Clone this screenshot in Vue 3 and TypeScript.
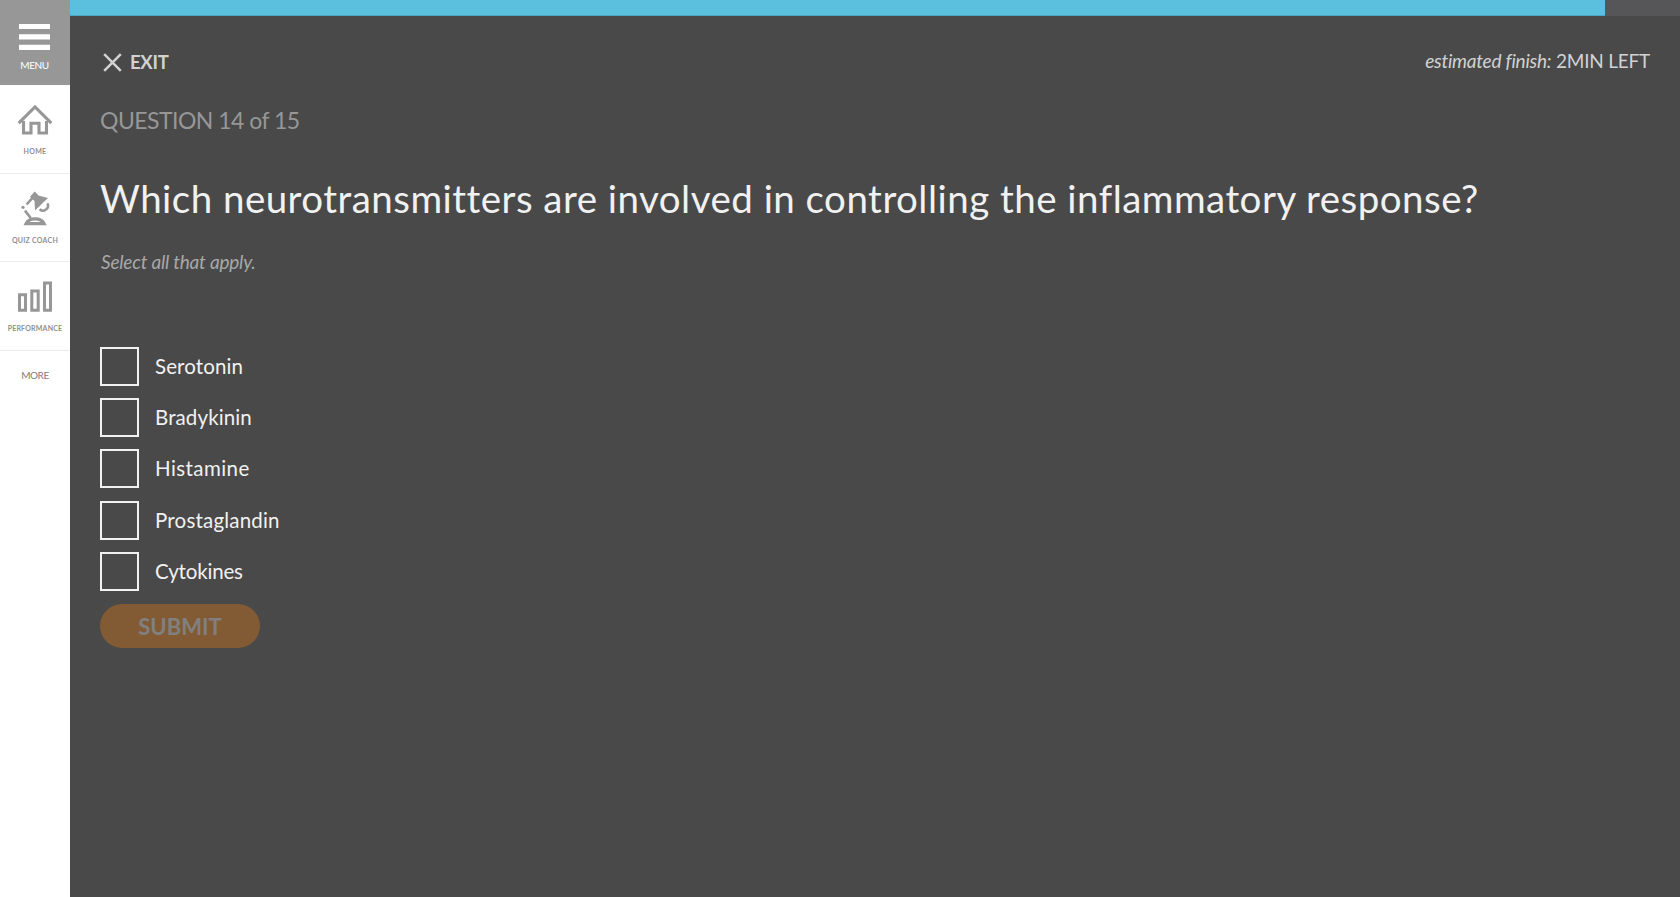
<script setup lang="ts">
interface Option {
  id: string
  label: string
  tracking: number
}

const progress = 95.34
const options: Option[] = [
  { id: 'serotonin', label: 'Serotonin', tracking: 0.1 },
  { id: 'bradykinin', label: 'Bradykinin', tracking: 0.12 },
  { id: 'histamine', label: 'Histamine', tracking: 0.42 },
  { id: 'prostaglandin', label: 'Prostaglandin', tracking: 0.2 },
  { id: 'cytokines', label: 'Cytokines', tracking: -0.17 },
]
</script>

<template>
  <div class="app">
    <nav class="sidebar">
      <button class="menu" type="button">
        <svg width="31" height="27" viewBox="0 0 31 27"><path d="M0 0h31v5H0zM0 10.300h31v5.200H0zM0 20.800h31v5.200H0z" fill="#fff" /></svg>
        <span>MENU</span>
      </button>
      <a class="item home">
        <svg width="36" height="36" viewBox="0 0 36 36" fill="none" stroke="#979797" stroke-width="3.100">
          <path d="M1.700 22.200 18 6l16.300 16.200" />
          <path d="M6.500 20V32H14v-9.800h8V32h7.500V20" />
        </svg>
        <span>HOME</span>
      </a>
      <a class="item coach">
        <svg width="36" height="36" viewBox="0 0 36 36" fill="none" stroke="#979797">
          <path d="M17.700 1.400 21.500 5.500 31 8 18 20.500 17.500 11 13 6.800z" fill="#979797" stroke="none" />
          <path d="M15.500 7.800 9.600 14.500M8 20.600l5.700 7.400" stroke-width="2.600" />
          <circle cx="6" cy="17.300" r="1.600" fill="#979797" stroke="none" />
          <path d="M30.400 13.200a5 5 0 0 1-7.800 6" stroke-width="2.500" />
          <path d="M9.100 33.600h18c-1.500-3.300-4.800-4.700-9-4.700s-7.500 1.400-9 4.700z" stroke-width="3.300" />
        </svg>
        <span>QUIZ COACH</span>
      </a>
      <a class="item performance">
        <svg width="36" height="36" viewBox="0 0 36 36" fill="none" stroke="#979797" stroke-width="3">
          <path d="M2.500 16.700h6v15.500h-6zM14.800 13h6.400v19.200h-6.400zM27.500 5h6v27.200h-6z" />
        </svg>
        <span>PERFORMANCE</span>
      </a>
      <a class="more">MORE</a>
    </nav>

    <main class="main">
      <div class="track"><div class="fill" :style="{ width: progress + '%' }"></div></div>
      <div class="content">
        <header class="top">
          <button class="exit" type="button">
            <svg width="19" height="19" viewBox="0 0 19 19"><path d="M1.200 1.200l16.600 16.600M17.800 1.200L1.200 17.800" stroke="#d2d2d2" stroke-width="2.500" /></svg>
            <span>EXIT</span>
          </button>
          <p class="finish"><em>estimated finish:</em> 2MIN LEFT</p>
        </header>
        <p class="count">QUESTION 14 of 15</p>
        <h1 class="question">Which neurotransmitters are involved in controlling the inflammatory response?</h1>
        <p class="hint">Select all that apply.</p>
        <ul class="options">
          <li v-for="option in options" :key="option.id" class="option">
            <span class="box" role="checkbox" aria-checked="false"></span>
            <span class="label" :style="{ letterSpacing: option.tracking + 'px' }">{{ option.label }}</span>
          </li>
        </ul>
        <button class="submit" type="button" disabled>SUBMIT</button>
      </div>
    </main>
  </div>
</template>

<style>
body { margin: 0; background: #494949; }
</style>

<style scoped>
.app {
  display: flex;
  height: 100vh;
  overflow: hidden;
  font-family: Lato, "Open Sans", sans-serif;
  color: #f1f1f1;
  background: #494949;
}
button { border: 0; background: none; font: inherit; padding: 0; color: inherit; }
p, h1, ul { margin: 0; padding: 0; }
svg { display: block; flex: none; }

.sidebar {
  width: 70px;
  flex: none;
  background: #fff;
  display: flex;
  flex-direction: column;
}
.menu {
  height: 85px;
  box-sizing: border-box;
  padding: 24px 1px 0 0;
  display: flex;
  flex-direction: column;
  align-items: center;
  gap: 8px;
  background: #979797;
  color: #fff;
  font-size: 10px;
  line-height: 12px;
  letter-spacing: -0.4px;
}
.item {
  height: 88.67px;
  box-sizing: border-box;
  border-bottom: 1px solid #eaeaea;
  padding-top: 16px;
  display: flex;
  flex-direction: column;
  align-items: center;
  gap: 9.3px;
  color: #8f8f8f;
  font-size: 7px;
  font-weight: 700;
  line-height: 10px;
}
.home { letter-spacing: 0.3px; }
.coach { letter-spacing: 0.25px; }
.performance { gap: 8.7px; letter-spacing: 0.2px; }
.more {
  padding: 18px 0 0;
  color: #7c7c7c;
  font-size: 10px;
  line-height: 12px;
  letter-spacing: -0.45px;
  text-align: center;
}

.main { flex: 1; min-width: 0; }
.track { height: 16px; background: #565658; }
.fill {
  height: 16px;
  box-sizing: border-box;
  background: #5bc0de;
  border-bottom: 1px solid #4ca7c3;
}
.content { padding: 33px 30px 0; }
.top { display: flex; justify-content: space-between; color: #d2d2d2; }
.exit {
  display: flex;
  align-items: center;
  gap: 8.5px;
  margin-top: 1px;
  padding-left: 2.500px;
  font-size: 18.5px;
  font-weight: 700;
  line-height: 25px;
  letter-spacing: -0.3px;
}
.finish { font-size: 19px; line-height: 23.5px; letter-spacing: -0.22px; }
.count { margin-top: 30px; font-size: 23px; line-height: 30px; letter-spacing: -0.53px; color: #979797; }
.question {
  margin-top: 39.5px;
  font-size: 38.5px;
  font-weight: 400;
  line-height: 46px;
  letter-spacing: 0.47px;
  white-space: nowrap;
}
.hint {
  margin-top: 29px;
  padding-left: 1px;
  font-size: 19px;
  font-style: italic;
  line-height: 24px;
  letter-spacing: -0.2px;
  color: #a8a8a8;
}
.options {
  margin-top: 73.37px;
  display: flex;
  flex-direction: column;
  gap: 12.25px;
  list-style: none;
}
.option { display: flex; gap: 16px; height: 39px; font-size: 20.5px; line-height: 38.5px; }
.box { width: 39px; height: 39px; box-sizing: border-box; border: 2px solid #f1f1f1; }
.submit {
  display: block;
  width: 160px;
  height: 44px;
  margin-top: 13px;
  border-radius: 22px;
  background: #825b34;
  color: #808080;
  font-size: 22px;
  font-weight: 700;
  line-height: 45px;
}
</style>
